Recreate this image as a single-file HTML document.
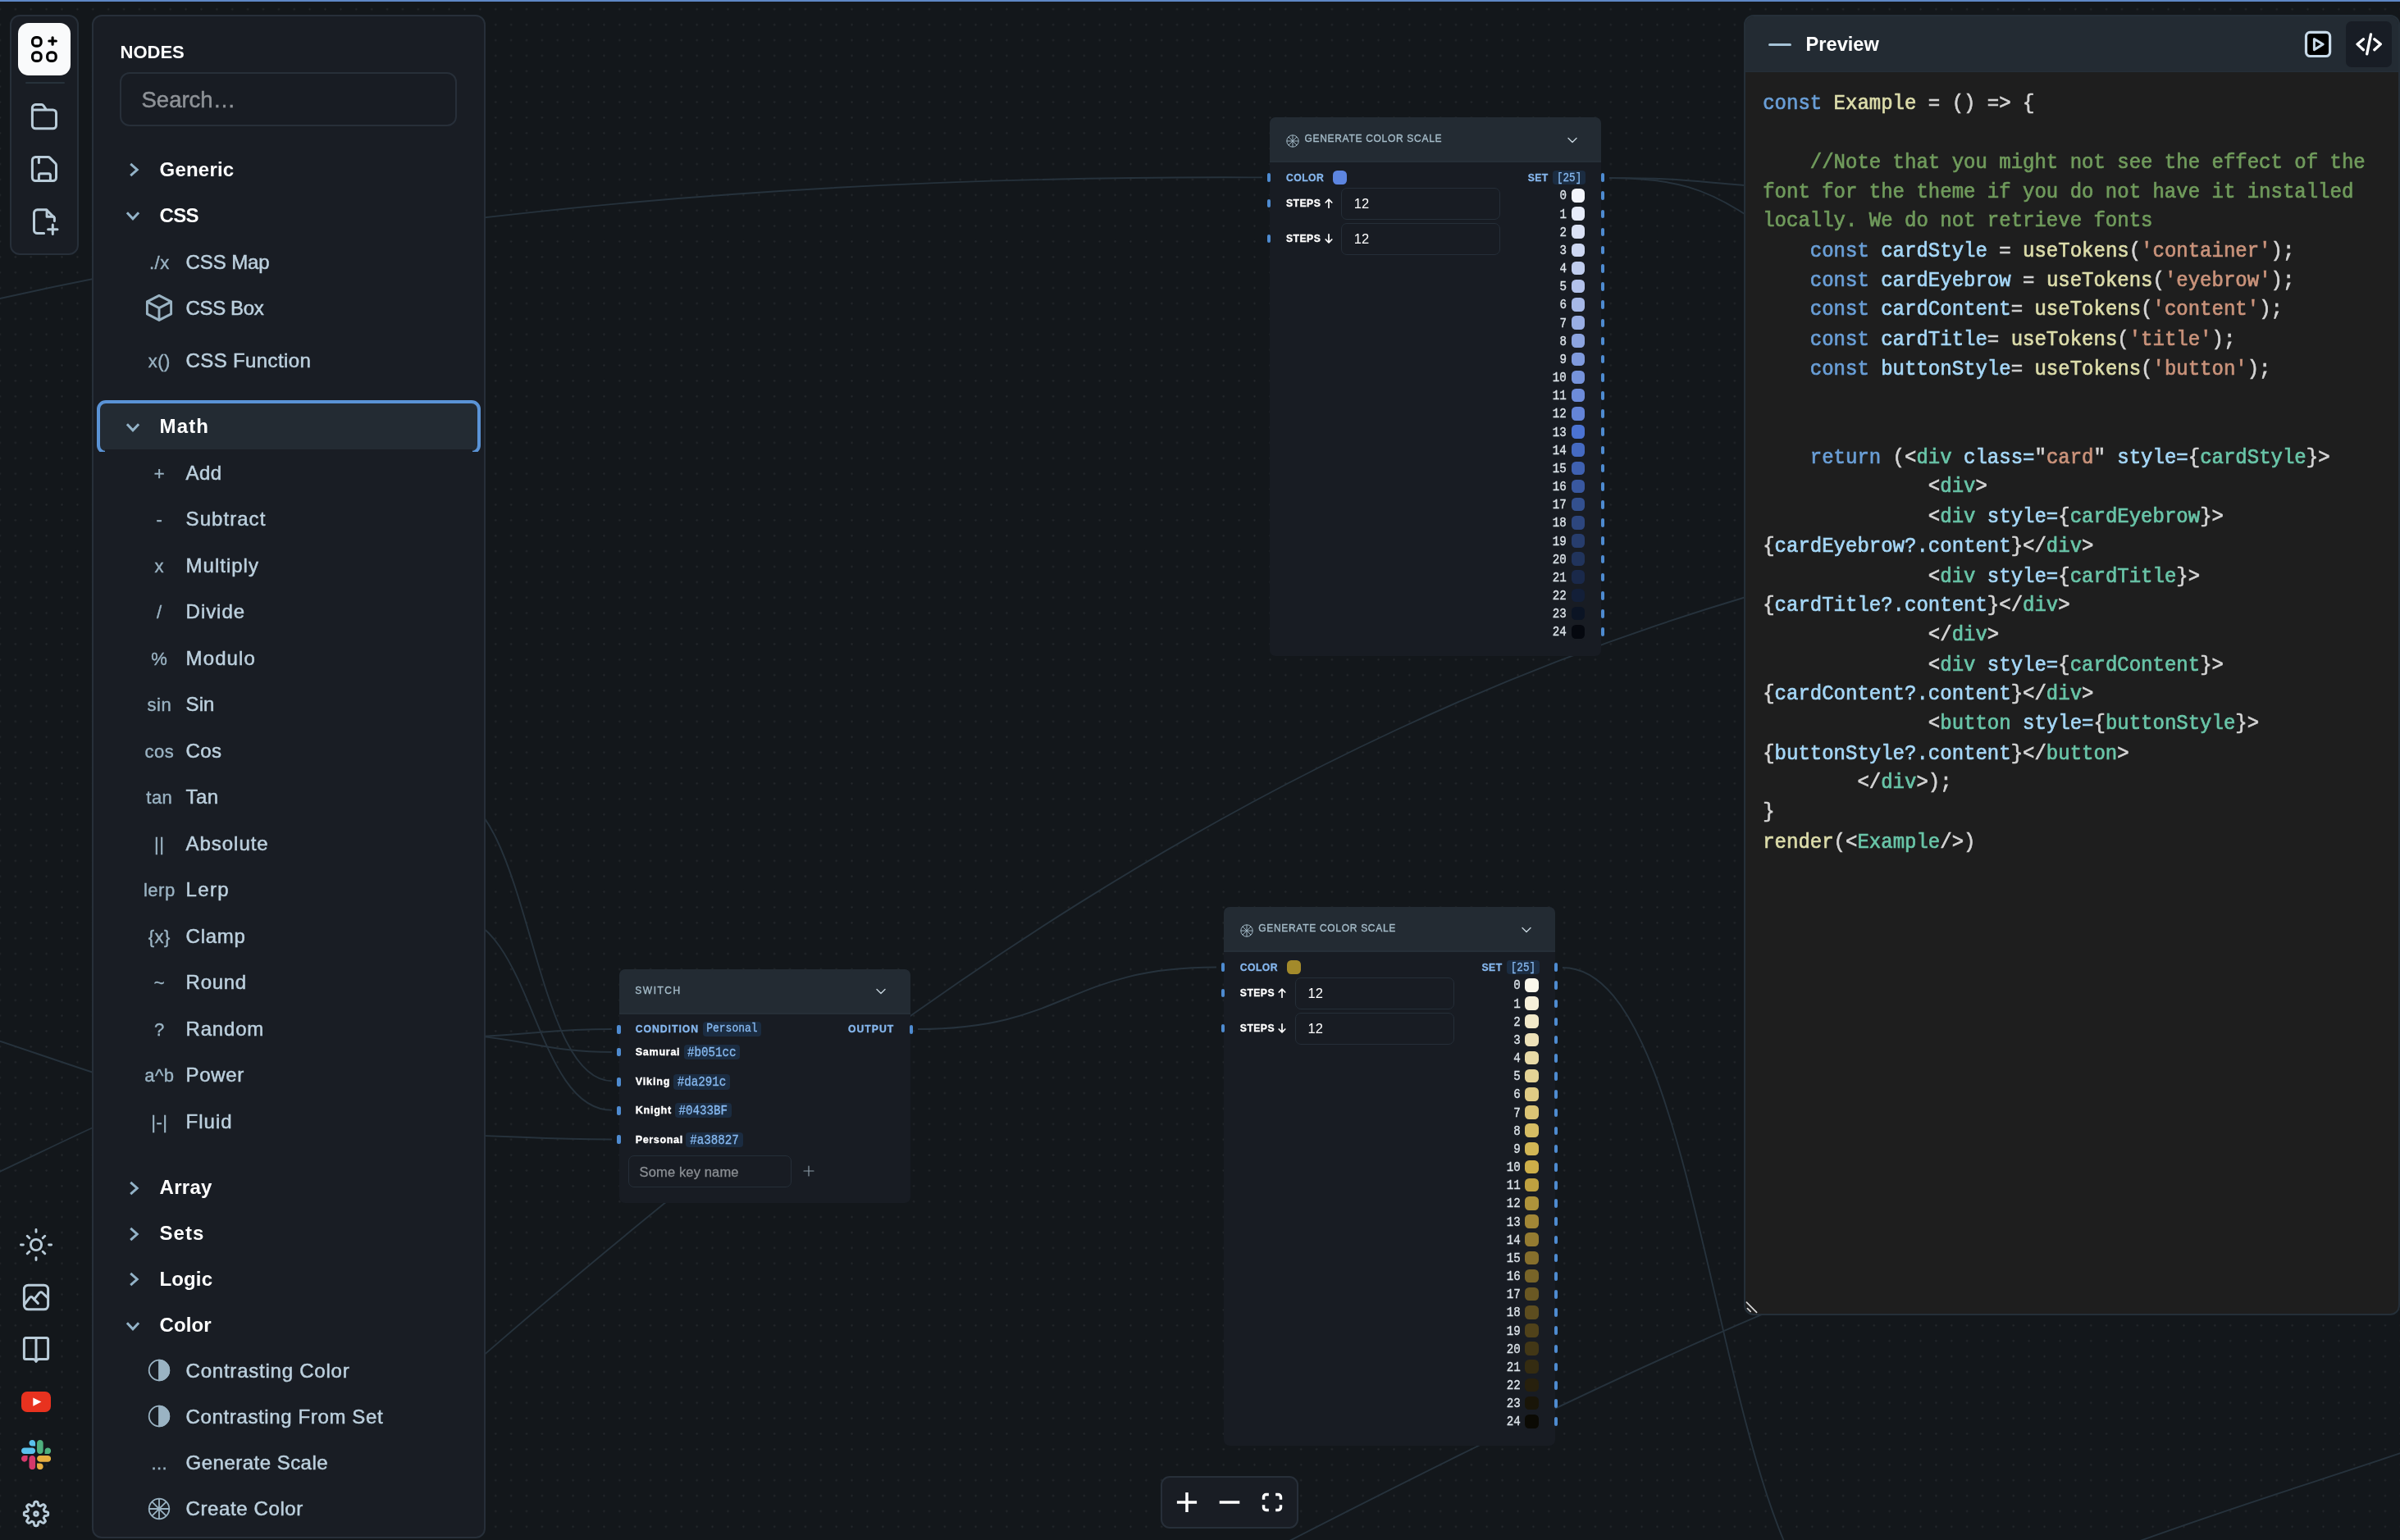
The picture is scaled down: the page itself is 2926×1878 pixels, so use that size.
<!DOCTYPE html>
<html><head><meta charset="utf-8"><title>Nodes</title>
<style>
html,body{margin:0;padding:0;}
html{width:2926px;height:1878px;overflow:hidden;}
body{width:2926px;height:1878px;overflow:hidden;background:#13171b;position:relative;font-family:"Liberation Sans", sans-serif;}
.b{position:absolute;box-sizing:border-box;display:block;}
.t{position:absolute;white-space:pre;}
#root{position:absolute;left:0;top:0;width:2926px;height:1878px;will-change:transform;overflow:hidden;}
.s{font-family:"Liberation Sans", sans-serif;}
.m{font-family:"Liberation Mono", monospace;transform:scaleY(1.1);-webkit-text-stroke:0.3px;}
.code{position:absolute;white-space:pre;font-family:"Liberation Mono", monospace;color:#d4d4d4;-webkit-text-stroke:0.65px;}
.k{color:#6a9fd7}.f{color:#dcdcaa}.v{color:#a5d7f7}.g{color:#ca937b}.c{color:#709b5c}.n{color:#69c5a8}
</style></head><body><div id="root">

<svg class="b" style="left:0;top:0" width="2926" height="1878" viewBox="0 0 2926 1878">
<defs><pattern id="dots" x="-9.441" y="1.859" width="18.883" height="18.883" patternUnits="userSpaceOnUse">
<circle cx="9.441" cy="9.441" r="1.15" fill="#262a2e"/></pattern></defs>
<rect width="2926" height="1878" fill="url(#dots)"/>
<g fill="none" stroke="#26323c" stroke-width="1.9"><path d="M-9 366 L0 364 C 504.5 252.1 1022.3 213.9 1539 216.4"/><path d="M1962 217 C 2044 217 2062 221 2127 226"/><path d="M1962 217 C 2044 217 2082 232 2127 261"/><path d="M552 1685.2 L592 1650.6 C 1062.4 1243.4 1530 906.7 2127 728.5"/><path d="M1119 1255 C 1301 1255 1301 1179.5 1483 1179.5"/><path d="M1905 1180 C 2093 1180 2091 1990 2281 1990"/><path d="M1555 1887.7 L1574 1878 C 1762.9 1781.4 1952.9 1686.5 2150 1602.2"/><path d="M2590 1886 C 2700 1845 2820 1808 2930 1771"/><path d="M542 966 C 647 966 647 1318.2 746 1318.2"/><path d="M548 1116 C 650 1116 650 1353.8 746 1353.8"/><path d="M480 1266 C 640 1266 650 1255 746 1255"/><path d="M480 1258 C 640 1260 650 1283 746 1283"/><path d="M480 1382 C 640 1385 650 1389.5 746 1389.5"/><path d="M-5 1268 C 40 1283 80 1297 120 1310"/><path d="M-5 1431 C 40 1410 80 1390 120 1372"/></g>
</svg>

<div class="b" style="left:0.00px;top:0.00px;width:2926.00px;height:2.20px;background:#5e88c6;"></div>
<div class="b" style="left:12.00px;top:18.00px;width:84.00px;height:293.00px;background:#191d24;border:2px solid #272f39;border-radius:12px;"></div>
<div class="b" style="left:22.00px;top:28.00px;width:64.20px;height:64.20px;background:#f9fafb;border-radius:13px;"></div>
<svg class="b" style="left:34.00px;top:40.00px;" width="40" height="40" viewBox="0 0 40 40" fill="none"><g stroke="#000" stroke-width="3.2" stroke-linecap="round" stroke-linejoin="round">
<rect x="5.6" y="5.6" width="10.5" height="10.5" rx="4.2"/>
<rect x="5.6" y="23.9" width="10.5" height="10.5" rx="4.2"/>
<rect x="23.7" y="23.9" width="10.5" height="10.5" rx="4.2"/>
<path d="M25.85 10H34.35M30.1 5.75V14.25"/></g></svg>
<div class="b" style="left:30.50px;top:100.00px;width:48.00px;height:2.00px;background:#27323b;border-radius:1px;"></div>
<svg class="b" style="left:34.00px;top:122.00px;" width="40" height="40" viewBox="0 0 40 40" fill="none"><g stroke="#b9ccd9" stroke-width="3" stroke-linecap="round" stroke-linejoin="round">
<path d="M5.4 12H30.5a4 4 0 0 1 4 4V30.8a4 4 0 0 1-4 4H9.4a4 4 0 0 1-4-4V9.6a4 4 0 0 1 4-4H16.6a3 3 0 0 1 2.4 1.2L22.6 12"/></g></svg>
<svg class="b" style="left:34.00px;top:186.00px;" width="40" height="40" viewBox="0 0 40 40" fill="none"><g stroke="#b9ccd9" stroke-width="3" stroke-linecap="round" stroke-linejoin="round">
<path d="M9.4 5.5H24.6a3 3 0 0 1 2.1.9L33.6 13.3a3 3 0 0 1 .9 2.1V30.6a4 4 0 0 1-4 4H9.4a4 4 0 0 1-4-4V9.5a4 4 0 0 1 4-4Z"/>
<path d="M13.4 5.5V12.6"/><path d="M13.4 34.6V27.7a2 2 0 0 1 2-2H25.4a2 2 0 0 1 2 2V34.6"/></g></svg>
<svg class="b" style="left:34.00px;top:250.00px;" width="40" height="40" viewBox="0 0 40 40" fill="none"><g stroke="#b9ccd9" stroke-width="3" stroke-linecap="round" stroke-linejoin="round">
<path d="M19.6 34.6H11.5a4 4 0 0 1-4-4V9.8a4 4 0 0 1 4-4H22.6L32.4 15.6V19.6"/>
<path d="M23.1 6.3V14.3H31.6"/><path d="M24.6 29.7H36M30.3 24V35.4"/></g></svg>
<svg class="b" style="left:22.00px;top:1496.00px;" width="44" height="44" viewBox="0 0 44 44" fill="none"><g stroke="#b9ccd9" stroke-width="2.9" stroke-linecap="round"><circle cx="22" cy="22" r="6.6"/><path d="M37.60 22.00L40.60 22.00M30.20 30.20L32.75 32.75M22.00 37.60L22.00 40.60M13.80 30.20L11.25 32.75M6.40 22.00L3.40 22.00M13.80 13.80L11.25 11.25M22.00 6.40L22.00 3.40M30.20 13.80L32.75 11.25"/></g></svg>
<svg class="b" style="left:24.00px;top:1562.00px;" width="40" height="40" viewBox="0 0 40 40" fill="none"><g stroke="#b9ccd9" stroke-width="3" stroke-linecap="round" stroke-linejoin="round">
<rect x="5.4" y="5.2" width="29.2" height="29.6" rx="5"/>
<path d="M6.2 28.4L12.2 20.4a2.2 2.2 0 0 1 3.4-.1L22.4 27.4"/><path d="M17.6 22.6L24 14.6a2.4 2.4 0 0 1 3.6-.1L34.4 21"/></g></svg>
<svg class="b" style="left:24.00px;top:1626.00px;" width="40" height="40" viewBox="0 0 40 40" fill="none"><g stroke="#b9ccd9" stroke-width="3" stroke-linecap="round" stroke-linejoin="round">
<path d="M20 7.4V33.6"/>
<path d="M20 5.6H7.4a2 2 0 0 0-2 2V29.4a2 2 0 0 0 2 2H16.2a4 4 0 0 1 3.8 3a4 4 0 0 1 3.8-3H32.6a2 2 0 0 0 2-2V7.6a2 2 0 0 0-2-2H20"/></g></svg>
<div class="b" style="left:26.00px;top:1697.00px;width:36.20px;height:25.20px;background:#e8321f;border-radius:7px;"></div>
<svg class="b" style="left:26.00px;top:1697.00px;" width="37" height="26" viewBox="0 0 37 26" fill="none"><path d="M14.3 7.4L24.4 12.6L14.3 17.8Z" fill="#fff"/></svg>
<svg class="b" style="left:26px;top:1756px" width="36.2" height="36.2" viewBox="0 0 122.8 122.8">
<path d="M25.8 77.6c0 7.1-5.8 12.9-12.9 12.9S0 84.7 0 77.6s5.8-12.9 12.9-12.9h12.9v12.9zm6.5 0c0-7.1 5.8-12.9 12.9-12.9s12.9 5.8 12.9 12.9v32.3c0 7.1-5.8 12.9-12.9 12.9s-12.9-5.8-12.9-12.9V77.6z" fill="#d4396b"/>
<path d="M45.2 25.8c-7.1 0-12.9-5.8-12.9-12.9S38.1 0 45.2 0s12.9 5.8 12.9 12.9v12.9H45.2zm0 6.5c7.1 0 12.9 5.8 12.9 12.9s-5.8 12.9-12.9 12.9H12.9C5.8 58.1 0 52.3 0 45.2s5.8-12.9 12.9-12.9h32.3z" fill="#5ac1ec"/>
<path d="M97 45.2c0-7.1 5.8-12.9 12.9-12.9s12.9 5.8 12.9 12.9-5.8 12.9-12.9 12.9H97V45.2zm-6.5 0c0 7.1-5.8 12.9-12.9 12.9s-12.9-5.8-12.9-12.9V12.9C64.7 5.8 70.5 0 77.6 0s12.9 5.8 12.9 12.9v32.3z" fill="#4fb07e"/>
<path d="M77.6 97c7.1 0 12.9 5.8 12.9 12.9s-5.8 12.9-12.9 12.9-12.9-5.8-12.9-12.9V97h12.9zm0-6.5c-7.1 0-12.9-5.8-12.9-12.9s5.8-12.9 12.9-12.9h32.3c7.1 0 12.9 5.8 12.9 12.9s-5.8 12.9-12.9 12.9H77.6z" fill="#e6ae40"/></svg>
<svg class="b" style="left:22.00px;top:1824.40px;" width="44" height="44" viewBox="0 0 44 44" fill="none"><g stroke="#b9ccd9" stroke-width="2.9" stroke-linejoin="round"><path d="M22.00 7.30L22.38 7.31L22.77 7.32L23.15 7.35L23.54 7.38L23.88 7.74L24.14 8.47L24.36 9.24L24.54 10.04L24.68 10.82L24.80 11.55L24.98 11.93L25.24 12.01L25.50 12.10L25.76 12.20L26.02 12.30L26.27 12.41L26.52 12.52L26.77 12.64L27.01 12.77L27.41 12.63L28.01 12.20L28.66 11.75L29.35 11.31L30.05 10.91L30.76 10.59L31.25 10.58L31.55 10.82L31.84 11.08L32.12 11.34L32.39 11.61L32.66 11.88L32.92 12.16L33.18 12.45L33.42 12.75L33.41 13.24L33.09 13.95L32.69 14.65L32.25 15.34L31.80 15.99L31.37 16.59L31.23 16.99L31.36 17.23L31.48 17.48L31.59 17.73L31.70 17.98L31.80 18.24L31.90 18.50L31.99 18.76L32.07 19.02L32.45 19.20L33.18 19.32L33.96 19.46L34.76 19.64L35.53 19.86L36.26 20.12L36.62 20.46L36.65 20.85L36.68 21.23L36.69 21.62L36.70 22.00L36.69 22.38L36.68 22.77L36.65 23.15L36.62 23.54L36.26 23.88L35.53 24.14L34.76 24.36L33.96 24.54L33.18 24.68L32.45 24.80L32.07 24.98L31.99 25.24L31.90 25.50L31.80 25.76L31.70 26.02L31.59 26.27L31.48 26.52L31.36 26.77L31.23 27.01L31.37 27.41L31.80 28.01L32.25 28.66L32.69 29.35L33.09 30.05L33.41 30.76L33.42 31.25L33.18 31.55L32.92 31.84L32.66 32.12L32.39 32.39L32.12 32.66L31.84 32.92L31.55 33.18L31.25 33.42L30.76 33.41L30.05 33.09L29.35 32.69L28.66 32.25L28.01 31.80L27.41 31.37L27.01 31.23L26.77 31.36L26.52 31.48L26.27 31.59L26.02 31.70L25.76 31.80L25.50 31.90L25.24 31.99L24.98 32.07L24.80 32.45L24.68 33.18L24.54 33.96L24.36 34.76L24.14 35.53L23.88 36.26L23.54 36.62L23.15 36.65L22.77 36.68L22.38 36.69L22.00 36.70L21.62 36.69L21.23 36.68L20.85 36.65L20.46 36.62L20.12 36.26L19.86 35.53L19.64 34.76L19.46 33.96L19.32 33.18L19.20 32.45L19.02 32.07L18.76 31.99L18.50 31.90L18.24 31.80L17.98 31.70L17.73 31.59L17.48 31.48L17.23 31.36L16.99 31.23L16.59 31.37L15.99 31.80L15.34 32.25L14.65 32.69L13.95 33.09L13.24 33.41L12.75 33.42L12.45 33.18L12.16 32.92L11.88 32.66L11.61 32.39L11.34 32.12L11.08 31.84L10.82 31.55L10.58 31.25L10.59 30.76L10.91 30.05L11.31 29.35L11.75 28.66L12.20 28.01L12.63 27.41L12.77 27.01L12.64 26.77L12.52 26.52L12.41 26.27L12.30 26.02L12.20 25.76L12.10 25.50L12.01 25.24L11.93 24.98L11.55 24.80L10.82 24.68L10.04 24.54L9.24 24.36L8.47 24.14L7.74 23.88L7.38 23.54L7.35 23.15L7.32 22.77L7.31 22.38L7.30 22.00L7.31 21.62L7.32 21.23L7.35 20.85L7.38 20.46L7.74 20.12L8.47 19.86L9.24 19.64L10.04 19.46L10.82 19.32L11.55 19.20L11.93 19.02L12.01 18.76L12.10 18.50L12.20 18.24L12.30 17.98L12.41 17.73L12.52 17.48L12.64 17.23L12.77 16.99L12.63 16.59L12.20 15.99L11.75 15.34L11.31 14.65L10.91 13.95L10.59 13.24L10.58 12.75L10.82 12.45L11.08 12.16L11.34 11.88L11.61 11.61L11.88 11.34L12.16 11.08L12.45 10.82L12.75 10.58L13.24 10.59L13.95 10.91L14.65 11.31L15.34 11.75L15.99 12.20L16.59 12.63L16.99 12.77L17.23 12.64L17.48 12.52L17.73 12.41L17.98 12.30L18.24 12.20L18.50 12.10L18.76 12.01L19.02 11.93L19.20 11.55L19.32 10.82L19.46 10.04L19.64 9.24L19.86 8.47L20.12 7.74L20.46 7.38L20.85 7.35L21.23 7.32L21.62 7.31Z"/><circle cx="22" cy="22" r="2.3"/></g></svg>
<div class="b" style="left:112.00px;top:18.00px;width:480.00px;height:1857.50px;background:#191d24;border:2px solid #272f39;border-radius:12px;"></div>
<div class="t s" style="top:47.50px;font-size:22px;line-height:31px;color:#fff;font-weight:bold;left:146.50px;">NODES</div>
<div class="b" style="left:146.00px;top:88.00px;width:411.00px;height:66.00px;background:#181c23;border:2px solid #272f39;border-radius:12px;"></div>
<div class="t s" style="top:102.50px;font-size:27.5px;line-height:38px;color:#8e9297;left:172.50px;-webkit-text-stroke:0.5px;">Search…</div>
<svg class="b" style="left:152.70px;top:195.10px;" width="20" height="24" viewBox="0 0 20 24" fill="none"><path d="M6.2 4.9L14.2 12L6.2 19.1" stroke="#93b3c8" stroke-width="3" stroke-linejoin="miter"/></svg><div class="t s" style="top:189.50px;font-size:24px;line-height:34px;color:#fff;font-weight:bold;letter-spacing:0.2px;left:194.60px;">Generic</div>
<svg class="b" style="left:150.10px;top:253.00px;" width="24" height="20" viewBox="0 0 24 20" fill="none"><path d="M4.9 6.2L12 13.8L19.1 6.2" stroke="#93b3c8" stroke-width="3" stroke-linejoin="miter"/></svg><div class="t s" style="top:245.50px;font-size:24px;line-height:34px;color:#fff;font-weight:bold;letter-spacing:-0.7px;left:194.60px;">CSS</div>
<div class="t s" style="top:305.00px;font-size:22px;line-height:31px;color:#9ab3c3;letter-spacing:0.5px;left:-105.70px;width:600px;text-align:center;-webkit-text-stroke:0.4px;">./x</div><div class="t s" style="top:303.00px;font-size:24px;line-height:34px;color:#bcd0de;letter-spacing:-0.1px;left:226.60px;-webkit-text-stroke:0.5px;">CSS Map</div>
<div class="t s" style="top:358.60px;font-size:24px;line-height:34px;color:#bcd0de;letter-spacing:-0.38px;left:226.60px;-webkit-text-stroke:0.5px;">CSS Box</div>
<svg class="b" style="left:174.00px;top:355.00px;" width="40" height="40" viewBox="0 0 40 40" fill="none"><g stroke="#9ab3c3" stroke-width="2.9" stroke-linejoin="round" stroke-linecap="round">
<path d="M20 5.4L34.6 12.9V27.9L20 35.4L5.4 27.9V12.9Z"/><path d="M5.6 13.1L20 20.6L34.4 13.1M20 20.6V35.2"/></g></svg>
<div class="t s" style="top:424.90px;font-size:22px;line-height:31px;color:#9ab3c3;letter-spacing:0.5px;left:-105.70px;width:600px;text-align:center;-webkit-text-stroke:0.4px;">x()</div><div class="t s" style="top:422.90px;font-size:24px;line-height:34px;color:#bcd0de;letter-spacing:0.37px;left:226.60px;-webkit-text-stroke:0.5px;">CSS Function</div>
<div class="b" style="left:117.9px;top:487.9px;width:467.8px;height:66px;background:#232b33;border:4.2px solid #5a93d6;border-radius:11px;"></div>
<div class="b" style="left:127.80px;top:547.60px;width:448.00px;height:10.00px;background:#191d24;"></div>
<div class="b" style="left:118.00px;top:551.20px;width:468.00px;height:6.00px;background:#191d24;"></div>
<svg class="b" style="left:150.10px;top:510.80px;" width="24" height="20" viewBox="0 0 24 20" fill="none"><path d="M4.9 6.2L12 13.8L19.1 6.2" stroke="#93b3c8" stroke-width="3" stroke-linejoin="miter"/></svg><div class="t s" style="top:503.30px;font-size:24px;line-height:34px;color:#fff;font-weight:bold;letter-spacing:1.1px;left:194.60px;">Math</div>
<div class="t s" style="top:562.00px;font-size:22px;line-height:31px;color:#9ab3c3;letter-spacing:0.5px;left:-105.70px;width:600px;text-align:center;-webkit-text-stroke:0.4px;">+</div><div class="t s" style="top:560.00px;font-size:24px;line-height:34px;color:#bcd0de;letter-spacing:0.4px;left:226.60px;-webkit-text-stroke:0.5px;">Add</div>
<div class="t s" style="top:618.47px;font-size:22px;line-height:31px;color:#9ab3c3;letter-spacing:0.5px;left:-105.70px;width:600px;text-align:center;-webkit-text-stroke:0.4px;">-</div><div class="t s" style="top:616.47px;font-size:24px;line-height:34px;color:#bcd0de;letter-spacing:1.05px;left:226.60px;-webkit-text-stroke:0.5px;">Subtract</div>
<div class="t s" style="top:674.94px;font-size:22px;line-height:31px;color:#9ab3c3;letter-spacing:0.5px;left:-105.70px;width:600px;text-align:center;-webkit-text-stroke:0.4px;">x</div><div class="t s" style="top:672.94px;font-size:24px;line-height:34px;color:#bcd0de;letter-spacing:1.0px;left:226.60px;-webkit-text-stroke:0.5px;">Multiply</div>
<div class="t s" style="top:731.41px;font-size:22px;line-height:31px;color:#9ab3c3;letter-spacing:0.5px;left:-105.70px;width:600px;text-align:center;-webkit-text-stroke:0.4px;">/</div><div class="t s" style="top:729.41px;font-size:24px;line-height:34px;color:#bcd0de;letter-spacing:0.95px;left:226.60px;-webkit-text-stroke:0.5px;">Divide</div>
<div class="t s" style="top:787.88px;font-size:22px;line-height:31px;color:#9ab3c3;letter-spacing:0.5px;left:-105.70px;width:600px;text-align:center;-webkit-text-stroke:0.4px;">%</div><div class="t s" style="top:785.88px;font-size:24px;line-height:34px;color:#bcd0de;letter-spacing:1.1px;left:226.60px;-webkit-text-stroke:0.5px;">Modulo</div>
<div class="t s" style="top:844.35px;font-size:22px;line-height:31px;color:#9ab3c3;letter-spacing:0.5px;left:-105.70px;width:600px;text-align:center;-webkit-text-stroke:0.4px;">sin</div><div class="t s" style="top:842.35px;font-size:24px;line-height:34px;color:#bcd0de;letter-spacing:0.05px;left:226.60px;-webkit-text-stroke:0.5px;">Sin</div>
<div class="t s" style="top:900.82px;font-size:22px;line-height:31px;color:#9ab3c3;letter-spacing:0.5px;left:-105.70px;width:600px;text-align:center;-webkit-text-stroke:0.4px;">cos</div><div class="t s" style="top:898.82px;font-size:24px;line-height:34px;color:#bcd0de;letter-spacing:0.35px;left:226.60px;-webkit-text-stroke:0.5px;">Cos</div>
<div class="t s" style="top:957.29px;font-size:22px;line-height:31px;color:#9ab3c3;letter-spacing:0.5px;left:-105.70px;width:600px;text-align:center;-webkit-text-stroke:0.4px;">tan</div><div class="t s" style="top:955.29px;font-size:24px;line-height:34px;color:#bcd0de;letter-spacing:0.4px;left:226.60px;-webkit-text-stroke:0.5px;">Tan</div>
<div class="t s" style="top:1013.76px;font-size:22px;line-height:31px;color:#9ab3c3;letter-spacing:0.5px;left:-105.70px;width:600px;text-align:center;-webkit-text-stroke:0.4px;">||</div><div class="t s" style="top:1011.76px;font-size:24px;line-height:34px;color:#bcd0de;letter-spacing:0.95px;left:226.60px;-webkit-text-stroke:0.5px;">Absolute</div>
<div class="t s" style="top:1070.23px;font-size:22px;line-height:31px;color:#9ab3c3;letter-spacing:0.5px;left:-105.70px;width:600px;text-align:center;-webkit-text-stroke:0.4px;">lerp</div><div class="t s" style="top:1068.23px;font-size:24px;line-height:34px;color:#bcd0de;letter-spacing:1.35px;left:226.60px;-webkit-text-stroke:0.5px;">Lerp</div>
<div class="t s" style="top:1126.70px;font-size:22px;line-height:31px;color:#9ab3c3;letter-spacing:0.5px;left:-105.70px;width:600px;text-align:center;-webkit-text-stroke:0.4px;">{x}</div><div class="t s" style="top:1124.70px;font-size:24px;line-height:34px;color:#bcd0de;letter-spacing:0.7px;left:226.60px;-webkit-text-stroke:0.5px;">Clamp</div>
<div class="t s" style="top:1183.17px;font-size:22px;line-height:31px;color:#9ab3c3;letter-spacing:0.5px;left:-105.70px;width:600px;text-align:center;-webkit-text-stroke:0.4px;">~</div><div class="t s" style="top:1181.17px;font-size:24px;line-height:34px;color:#bcd0de;letter-spacing:0.7px;left:226.60px;-webkit-text-stroke:0.5px;">Round</div>
<div class="t s" style="top:1239.64px;font-size:22px;line-height:31px;color:#9ab3c3;letter-spacing:0.5px;left:-105.70px;width:600px;text-align:center;-webkit-text-stroke:0.4px;">?</div><div class="t s" style="top:1237.64px;font-size:24px;line-height:34px;color:#bcd0de;letter-spacing:0.8px;left:226.60px;-webkit-text-stroke:0.5px;">Random</div>
<div class="t s" style="top:1296.11px;font-size:22px;line-height:31px;color:#9ab3c3;letter-spacing:0.5px;left:-105.70px;width:600px;text-align:center;-webkit-text-stroke:0.4px;">a^b</div><div class="t s" style="top:1294.11px;font-size:24px;line-height:34px;color:#bcd0de;letter-spacing:0.65px;left:226.60px;-webkit-text-stroke:0.5px;">Power</div>
<div class="t s" style="top:1352.58px;font-size:22px;line-height:31px;color:#9ab3c3;letter-spacing:0.5px;left:-105.70px;width:600px;text-align:center;-webkit-text-stroke:0.4px;">|-|</div><div class="t s" style="top:1350.58px;font-size:24px;line-height:34px;color:#bcd0de;letter-spacing:1.0px;left:226.60px;-webkit-text-stroke:0.5px;">Fluid</div>
<svg class="b" style="left:152.70px;top:1436.60px;" width="20" height="24" viewBox="0 0 20 24" fill="none"><path d="M6.2 4.9L14.2 12L6.2 19.1" stroke="#93b3c8" stroke-width="3" stroke-linejoin="miter"/></svg><div class="t s" style="top:1431.00px;font-size:24px;line-height:34px;color:#fff;font-weight:bold;letter-spacing:0.28px;left:194.60px;">Array</div>
<svg class="b" style="left:152.70px;top:1492.60px;" width="20" height="24" viewBox="0 0 20 24" fill="none"><path d="M6.2 4.9L14.2 12L6.2 19.1" stroke="#93b3c8" stroke-width="3" stroke-linejoin="miter"/></svg><div class="t s" style="top:1487.00px;font-size:24px;line-height:34px;color:#fff;font-weight:bold;letter-spacing:1.0px;left:194.60px;">Sets</div>
<svg class="b" style="left:152.70px;top:1548.10px;" width="20" height="24" viewBox="0 0 20 24" fill="none"><path d="M6.2 4.9L14.2 12L6.2 19.1" stroke="#93b3c8" stroke-width="3" stroke-linejoin="miter"/></svg><div class="t s" style="top:1542.50px;font-size:24px;line-height:34px;color:#fff;font-weight:bold;letter-spacing:0.1px;left:194.60px;">Logic</div>
<svg class="b" style="left:150.10px;top:1606.50px;" width="24" height="20" viewBox="0 0 24 20" fill="none"><path d="M4.9 6.2L12 13.8L19.1 6.2" stroke="#93b3c8" stroke-width="3" stroke-linejoin="miter"/></svg><div class="t s" style="top:1599.00px;font-size:24px;line-height:34px;color:#fff;font-weight:bold;letter-spacing:0.1px;left:194.60px;">Color</div>
<svg class="b" style="left:174.00px;top:1651.10px;" width="40" height="40" viewBox="0 0 40 40" fill="none"><circle cx="20" cy="20" r="12.3" stroke="#9ab3c3" stroke-width="1.8"/>
<path d="M20 7.7A12.3 12.3 0 0 1 20 32.3Z" fill="#9ab3c3" stroke="#9ab3c3" stroke-width="1.8"/></svg>
<div class="t s" style="top:1655.00px;font-size:24px;line-height:34px;color:#bcd0de;letter-spacing:0.77px;left:226.60px;-webkit-text-stroke:0.5px;">Contrasting Color</div>
<svg class="b" style="left:174.00px;top:1706.90px;" width="40" height="40" viewBox="0 0 40 40" fill="none"><circle cx="20" cy="20" r="12.3" stroke="#9ab3c3" stroke-width="1.8"/>
<path d="M20 7.7A12.3 12.3 0 0 1 20 32.3Z" fill="#9ab3c3" stroke="#9ab3c3" stroke-width="1.8"/></svg>
<div class="t s" style="top:1710.90px;font-size:24px;line-height:34px;color:#bcd0de;letter-spacing:0.63px;left:226.60px;-webkit-text-stroke:0.5px;">Contrasting From Set</div>
<div class="t s" style="top:1769.20px;font-size:22px;line-height:31px;color:#9ab3c3;letter-spacing:0.5px;left:-105.70px;width:600px;text-align:center;-webkit-text-stroke:0.4px;">...</div><div class="t s" style="top:1767.20px;font-size:24px;line-height:34px;color:#bcd0de;letter-spacing:0.48px;left:226.60px;-webkit-text-stroke:0.5px;">Generate Scale</div>
<svg class="b" style="left:174.00px;top:1820.00px;" width="40" height="40" viewBox="0 0 40 40" fill="none"><g stroke="#9ab3c3" stroke-width="1.8"><circle cx="20" cy="20" r="12.3"/><path d="M32.30 20.00L7.70 20.00M28.70 28.70L11.30 11.30M20.00 32.30L20.00 7.70M11.30 28.70L28.70 11.30"/></g></svg>
<div class="t s" style="top:1823.30px;font-size:24px;line-height:34px;color:#bcd0de;letter-spacing:0.6px;left:226.60px;-webkit-text-stroke:0.5px;">Create Color</div>
<div class="b" style="left:1548.2px;top:143.4px;width:404px;height:656.2px;background:#181c23;border-radius:7px;overflow:hidden;"><div class="b" style="left:0;top:0;width:404px;height:54.7px;background:#232b33;border-bottom:2.4px solid #262f38;"></div></div><svg class="b" style="left:1556.20px;top:151.90px;" width="40" height="40" viewBox="0 0 40 40" fill="none"><g stroke="#9fb5c2" stroke-width="1.0"><circle cx="20" cy="20" r="7.2"/><path d="M27.20 20.00L12.80 20.00M25.09 25.09L14.91 14.91M20.00 27.20L20.00 12.80M14.91 25.09L25.09 14.91"/></g></svg><div class="t s" style="top:161.10px;font-size:12px;line-height:17px;color:#a5bcc9;letter-spacing:0.7px;left:1590.40px;-webkit-text-stroke:0.35px;">GENERATE COLOR SCALE</div><svg class="b" style="left:1908.70px;top:164.80px;" width="16" height="12" viewBox="0 0 16 12" fill="none"><path d="M3 3.6L8 8.4L13 3.6" stroke="#c5d3dc" stroke-width="1.4" stroke-linecap="round" stroke-linejoin="round"/></svg><div class="b" style="left:1545.10px;top:211.20px;width:4.40px;height:10.60px;background:#4e8bd0;border-radius:2.1px;"></div><div class="t s" style="top:208.80px;font-size:12.2px;line-height:17px;color:#86b7ee;font-weight:bold;letter-spacing:0.45px;left:1568.00px;-webkit-text-stroke:0.3px;">COLOR</div><div class="b" style="left:1625.00px;top:208.40px;width:17.00px;height:16.60px;background:#5d85e0;border-radius:5.2px;"></div><div class="b" style="left:1545.10px;top:242.70px;width:4.40px;height:10.60px;background:#4e8bd0;border-radius:2.1px;"></div><div class="t s" style="top:239.90px;font-size:12.2px;line-height:17px;color:#fff;font-weight:bold;letter-spacing:0.45px;left:1568.00px;-webkit-text-stroke:0.3px;">STEPS</div><svg class="b" style="left:1613.60px;top:241.00px;" width="12" height="14" viewBox="0 0 12 14" fill="none"><path d="M6 12.2V2.2M2.2 6L6 2.2L9.8 6" stroke="#fff" stroke-width="1.7" stroke-linecap="round" stroke-linejoin="round"/></svg><div class="b" style="left:1634.80px;top:228.50px;width:194.40px;height:39.00px;background:#181c23;border:1.3px solid #252e38;border-radius:7px;"></div><div class="t s" style="top:236.80px;font-size:16.5px;line-height:23px;color:#fff;left:1650.80px;">12</div><div class="b" style="left:1545.10px;top:285.70px;width:4.40px;height:10.60px;background:#4e8bd0;border-radius:2.1px;"></div><div class="t s" style="top:282.90px;font-size:12.2px;line-height:17px;color:#fff;font-weight:bold;letter-spacing:0.45px;left:1568.00px;-webkit-text-stroke:0.3px;">STEPS</div><svg class="b" style="left:1613.60px;top:284.00px;" width="12" height="14" viewBox="0 0 12 14" fill="none"><path d="M6 1.8V11.8M2.2 8L6 11.8L9.8 8" stroke="#fff" stroke-width="1.7" stroke-linecap="round" stroke-linejoin="round"/></svg><div class="b" style="left:1634.80px;top:271.50px;width:194.40px;height:39.00px;background:#181c23;border:1.3px solid #252e38;border-radius:7px;"></div><div class="t s" style="top:279.80px;font-size:16.5px;line-height:23px;color:#fff;left:1650.80px;">12</div><div class="t s" style="top:208.80px;font-size:12.2px;line-height:17px;color:#86b7ee;font-weight:bold;letter-spacing:0.45px;left:1862.70px;-webkit-text-stroke:0.3px;">SET</div><div class="b" style="left:1893.00px;top:208.10px;width:40.20px;height:17.30px;background:#1b2c41;border-radius:4px;"></div><div class="t m" style="top:209.19px;font-size:12.6px;line-height:18px;color:#86b8ef;left:1613.10px;width:600px;text-align:center;">[25]</div><div class="b" style="left:1951.60px;top:211.40px;width:4.40px;height:10.60px;background:#4e8bd0;border-radius:2.1px;"></div><div class="t m" style="top:229.49px;font-size:14.2px;line-height:20px;color:#dde4ea;left:1309.90px;width:600px;text-align:right;">0</div><div class="b" style="left:1915.60px;top:230.10px;width:16.60px;height:16.60px;background:#f3f5fc;border-radius:5.2px;"></div><div class="b" style="left:1951.60px;top:233.40px;width:4.40px;height:10.60px;background:#4e8bd0;border-radius:2.1px;"></div><div class="t m" style="top:251.65px;font-size:14.2px;line-height:20px;color:#dde4ea;left:1309.90px;width:600px;text-align:right;">1</div><div class="b" style="left:1915.60px;top:252.26px;width:16.60px;height:16.60px;background:#e6ebf9;border-radius:5.2px;"></div><div class="b" style="left:1951.60px;top:255.56px;width:4.40px;height:10.60px;background:#4e8bd0;border-radius:2.1px;"></div><div class="t m" style="top:273.81px;font-size:14.2px;line-height:20px;color:#dde4ea;left:1309.90px;width:600px;text-align:right;">2</div><div class="b" style="left:1915.60px;top:274.42px;width:16.60px;height:16.60px;background:#dae1f5;border-radius:5.2px;"></div><div class="b" style="left:1951.60px;top:277.72px;width:4.40px;height:10.60px;background:#4e8bd0;border-radius:2.1px;"></div><div class="t m" style="top:295.97px;font-size:14.2px;line-height:20px;color:#dde4ea;left:1309.90px;width:600px;text-align:right;">3</div><div class="b" style="left:1915.60px;top:296.58px;width:16.60px;height:16.60px;background:#cdd7f2;border-radius:5.2px;"></div><div class="b" style="left:1951.60px;top:299.88px;width:4.40px;height:10.60px;background:#4e8bd0;border-radius:2.1px;"></div><div class="t m" style="top:318.13px;font-size:14.2px;line-height:20px;color:#dde4ea;left:1309.90px;width:600px;text-align:right;">4</div><div class="b" style="left:1915.60px;top:318.74px;width:16.60px;height:16.60px;background:#c0cdee;border-radius:5.2px;"></div><div class="b" style="left:1951.60px;top:322.04px;width:4.40px;height:10.60px;background:#4e8bd0;border-radius:2.1px;"></div><div class="t m" style="top:340.29px;font-size:14.2px;line-height:20px;color:#dde4ea;left:1309.90px;width:600px;text-align:right;">5</div><div class="b" style="left:1915.60px;top:340.90px;width:16.60px;height:16.60px;background:#b3c2eb;border-radius:5.2px;"></div><div class="b" style="left:1951.60px;top:344.20px;width:4.40px;height:10.60px;background:#4e8bd0;border-radius:2.1px;"></div><div class="t m" style="top:362.45px;font-size:14.2px;line-height:20px;color:#dde4ea;left:1309.90px;width:600px;text-align:right;">6</div><div class="b" style="left:1915.60px;top:363.06px;width:16.60px;height:16.60px;background:#a6b8e7;border-radius:5.2px;"></div><div class="b" style="left:1951.60px;top:366.36px;width:4.40px;height:10.60px;background:#4e8bd0;border-radius:2.1px;"></div><div class="t m" style="top:384.61px;font-size:14.2px;line-height:20px;color:#dde4ea;left:1309.90px;width:600px;text-align:right;">7</div><div class="b" style="left:1915.60px;top:385.22px;width:16.60px;height:16.60px;background:#99aee4;border-radius:5.2px;"></div><div class="b" style="left:1951.60px;top:388.52px;width:4.40px;height:10.60px;background:#4e8bd0;border-radius:2.1px;"></div><div class="t m" style="top:406.77px;font-size:14.2px;line-height:20px;color:#dde4ea;left:1309.90px;width:600px;text-align:right;">8</div><div class="b" style="left:1915.60px;top:407.38px;width:16.60px;height:16.60px;background:#8ca4e0;border-radius:5.2px;"></div><div class="b" style="left:1951.60px;top:410.68px;width:4.40px;height:10.60px;background:#4e8bd0;border-radius:2.1px;"></div><div class="t m" style="top:428.93px;font-size:14.2px;line-height:20px;color:#dde4ea;left:1309.90px;width:600px;text-align:right;">9</div><div class="b" style="left:1915.60px;top:429.54px;width:16.60px;height:16.60px;background:#7f9add;border-radius:5.2px;"></div><div class="b" style="left:1951.60px;top:432.84px;width:4.40px;height:10.60px;background:#4e8bd0;border-radius:2.1px;"></div><div class="t m" style="top:451.09px;font-size:14.2px;line-height:20px;color:#dde4ea;left:1309.90px;width:600px;text-align:right;">10</div><div class="b" style="left:1915.60px;top:451.70px;width:16.60px;height:16.60px;background:#7693db;border-radius:5.2px;"></div><div class="b" style="left:1951.60px;top:455.00px;width:4.40px;height:10.60px;background:#4e8bd0;border-radius:2.1px;"></div><div class="t m" style="top:473.25px;font-size:14.2px;line-height:20px;color:#dde4ea;left:1309.90px;width:600px;text-align:right;">11</div><div class="b" style="left:1915.60px;top:473.86px;width:16.60px;height:16.60px;background:#6d8bd9;border-radius:5.2px;"></div><div class="b" style="left:1951.60px;top:477.16px;width:4.40px;height:10.60px;background:#4e8bd0;border-radius:2.1px;"></div><div class="t m" style="top:495.41px;font-size:14.2px;line-height:20px;color:#dde4ea;left:1309.90px;width:600px;text-align:right;">12</div><div class="b" style="left:1915.60px;top:496.02px;width:16.60px;height:16.60px;background:#6484d7;border-radius:5.2px;"></div><div class="b" style="left:1951.60px;top:499.32px;width:4.40px;height:10.60px;background:#4e8bd0;border-radius:2.1px;"></div><div class="t m" style="top:517.57px;font-size:14.2px;line-height:20px;color:#dde4ea;left:1309.90px;width:600px;text-align:right;">13</div><div class="b" style="left:1915.60px;top:518.18px;width:16.60px;height:16.60px;background:#4b73d3;border-radius:5.2px;"></div><div class="b" style="left:1951.60px;top:521.48px;width:4.40px;height:10.60px;background:#4e8bd0;border-radius:2.1px;"></div><div class="t m" style="top:539.73px;font-size:14.2px;line-height:20px;color:#dde4ea;left:1309.90px;width:600px;text-align:right;">14</div><div class="b" style="left:1915.60px;top:540.34px;width:16.60px;height:16.60px;background:#456ac2;border-radius:5.2px;"></div><div class="b" style="left:1951.60px;top:543.64px;width:4.40px;height:10.60px;background:#4e8bd0;border-radius:2.1px;"></div><div class="t m" style="top:561.89px;font-size:14.2px;line-height:20px;color:#dde4ea;left:1309.90px;width:600px;text-align:right;">15</div><div class="b" style="left:1915.60px;top:562.50px;width:16.60px;height:16.60px;background:#3f61b1;border-radius:5.2px;"></div><div class="b" style="left:1951.60px;top:565.80px;width:4.40px;height:10.60px;background:#4e8bd0;border-radius:2.1px;"></div><div class="t m" style="top:584.05px;font-size:14.2px;line-height:20px;color:#dde4ea;left:1309.90px;width:600px;text-align:right;">16</div><div class="b" style="left:1915.60px;top:584.66px;width:16.60px;height:16.60px;background:#3958a0;border-radius:5.2px;"></div><div class="b" style="left:1951.60px;top:587.96px;width:4.40px;height:10.60px;background:#4e8bd0;border-radius:2.1px;"></div><div class="t m" style="top:606.21px;font-size:14.2px;line-height:20px;color:#dde4ea;left:1309.90px;width:600px;text-align:right;">17</div><div class="b" style="left:1915.60px;top:606.82px;width:16.60px;height:16.60px;background:#33508f;border-radius:5.2px;"></div><div class="b" style="left:1951.60px;top:610.12px;width:4.40px;height:10.60px;background:#4e8bd0;border-radius:2.1px;"></div><div class="t m" style="top:628.37px;font-size:14.2px;line-height:20px;color:#dde4ea;left:1309.90px;width:600px;text-align:right;">18</div><div class="b" style="left:1915.60px;top:628.98px;width:16.60px;height:16.60px;background:#2d467e;border-radius:5.2px;"></div><div class="b" style="left:1951.60px;top:632.28px;width:4.40px;height:10.60px;background:#4e8bd0;border-radius:2.1px;"></div><div class="t m" style="top:650.53px;font-size:14.2px;line-height:20px;color:#dde4ea;left:1309.90px;width:600px;text-align:right;">19</div><div class="b" style="left:1915.60px;top:651.14px;width:16.60px;height:16.60px;background:#273d6d;border-radius:5.2px;"></div><div class="b" style="left:1951.60px;top:654.44px;width:4.40px;height:10.60px;background:#4e8bd0;border-radius:2.1px;"></div><div class="t m" style="top:672.69px;font-size:14.2px;line-height:20px;color:#dde4ea;left:1309.90px;width:600px;text-align:right;">20</div><div class="b" style="left:1915.60px;top:673.30px;width:16.60px;height:16.60px;background:#21345c;border-radius:5.2px;"></div><div class="b" style="left:1951.60px;top:676.60px;width:4.40px;height:10.60px;background:#4e8bd0;border-radius:2.1px;"></div><div class="t m" style="top:694.85px;font-size:14.2px;line-height:20px;color:#dde4ea;left:1309.90px;width:600px;text-align:right;">21</div><div class="b" style="left:1915.60px;top:695.46px;width:16.60px;height:16.60px;background:#1a294a;border-radius:5.2px;"></div><div class="b" style="left:1951.60px;top:698.76px;width:4.40px;height:10.60px;background:#4e8bd0;border-radius:2.1px;"></div><div class="t m" style="top:717.01px;font-size:14.2px;line-height:20px;color:#dde4ea;left:1309.90px;width:600px;text-align:right;">22</div><div class="b" style="left:1915.60px;top:717.62px;width:16.60px;height:16.60px;background:#131f38;border-radius:5.2px;"></div><div class="b" style="left:1951.60px;top:720.92px;width:4.40px;height:10.60px;background:#4e8bd0;border-radius:2.1px;"></div><div class="t m" style="top:739.17px;font-size:14.2px;line-height:20px;color:#dde4ea;left:1309.90px;width:600px;text-align:right;">23</div><div class="b" style="left:1915.60px;top:739.78px;width:16.60px;height:16.60px;background:#0b1424;border-radius:5.2px;"></div><div class="b" style="left:1951.60px;top:743.08px;width:4.40px;height:10.60px;background:#4e8bd0;border-radius:2.1px;"></div><div class="t m" style="top:761.33px;font-size:14.2px;line-height:20px;color:#dde4ea;left:1309.90px;width:600px;text-align:right;">24</div><div class="b" style="left:1915.60px;top:761.94px;width:16.60px;height:16.60px;background:#05080f;border-radius:5.2px;"></div><div class="b" style="left:1951.60px;top:765.24px;width:4.40px;height:10.60px;background:#4e8bd0;border-radius:2.1px;"></div>
<div class="b" style="left:1492px;top:1106.3999999999999px;width:404px;height:656.2px;background:#181c23;border-radius:7px;overflow:hidden;"><div class="b" style="left:0;top:0;width:404px;height:54.7px;background:#232b33;border-bottom:2.4px solid #262f38;"></div></div><svg class="b" style="left:1500.00px;top:1114.90px;" width="40" height="40" viewBox="0 0 40 40" fill="none"><g stroke="#9fb5c2" stroke-width="1.0"><circle cx="20" cy="20" r="7.2"/><path d="M27.20 20.00L12.80 20.00M25.09 25.09L14.91 14.91M20.00 27.20L20.00 12.80M14.91 25.09L25.09 14.91"/></g></svg><div class="t s" style="top:1124.10px;font-size:12px;line-height:17px;color:#a5bcc9;letter-spacing:0.7px;left:1534.20px;-webkit-text-stroke:0.35px;">GENERATE COLOR SCALE</div><svg class="b" style="left:1852.50px;top:1127.80px;" width="16" height="12" viewBox="0 0 16 12" fill="none"><path d="M3 3.6L8 8.4L13 3.6" stroke="#c5d3dc" stroke-width="1.4" stroke-linecap="round" stroke-linejoin="round"/></svg><div class="b" style="left:1488.90px;top:1174.20px;width:4.40px;height:10.60px;background:#4e8bd0;border-radius:2.1px;"></div><div class="t s" style="top:1171.80px;font-size:12.2px;line-height:17px;color:#86b7ee;font-weight:bold;letter-spacing:0.45px;left:1511.80px;-webkit-text-stroke:0.3px;">COLOR</div><div class="b" style="left:1568.80px;top:1171.40px;width:17.00px;height:16.60px;background:#a38a2b;border-radius:5.2px;"></div><div class="b" style="left:1488.90px;top:1205.70px;width:4.40px;height:10.60px;background:#4e8bd0;border-radius:2.1px;"></div><div class="t s" style="top:1202.90px;font-size:12.2px;line-height:17px;color:#fff;font-weight:bold;letter-spacing:0.45px;left:1511.80px;-webkit-text-stroke:0.3px;">STEPS</div><svg class="b" style="left:1557.40px;top:1204.00px;" width="12" height="14" viewBox="0 0 12 14" fill="none"><path d="M6 12.2V2.2M2.2 6L6 2.2L9.8 6" stroke="#fff" stroke-width="1.7" stroke-linecap="round" stroke-linejoin="round"/></svg><div class="b" style="left:1578.60px;top:1191.50px;width:194.40px;height:39.00px;background:#181c23;border:1.3px solid #252e38;border-radius:7px;"></div><div class="t s" style="top:1199.80px;font-size:16.5px;line-height:23px;color:#fff;left:1594.60px;">12</div><div class="b" style="left:1488.90px;top:1248.70px;width:4.40px;height:10.60px;background:#4e8bd0;border-radius:2.1px;"></div><div class="t s" style="top:1245.90px;font-size:12.2px;line-height:17px;color:#fff;font-weight:bold;letter-spacing:0.45px;left:1511.80px;-webkit-text-stroke:0.3px;">STEPS</div><svg class="b" style="left:1557.40px;top:1247.00px;" width="12" height="14" viewBox="0 0 12 14" fill="none"><path d="M6 1.8V11.8M2.2 8L6 11.8L9.8 8" stroke="#fff" stroke-width="1.7" stroke-linecap="round" stroke-linejoin="round"/></svg><div class="b" style="left:1578.60px;top:1234.50px;width:194.40px;height:39.00px;background:#181c23;border:1.3px solid #252e38;border-radius:7px;"></div><div class="t s" style="top:1242.80px;font-size:16.5px;line-height:23px;color:#fff;left:1594.60px;">12</div><div class="t s" style="top:1171.80px;font-size:12.2px;line-height:17px;color:#86b7ee;font-weight:bold;letter-spacing:0.45px;left:1806.50px;-webkit-text-stroke:0.3px;">SET</div><div class="b" style="left:1836.80px;top:1171.10px;width:40.20px;height:17.30px;background:#1b2c41;border-radius:4px;"></div><div class="t m" style="top:1172.19px;font-size:12.6px;line-height:18px;color:#86b8ef;left:1556.90px;width:600px;text-align:center;">[25]</div><div class="b" style="left:1894.70px;top:1174.40px;width:4.40px;height:10.60px;background:#4e8bd0;border-radius:2.1px;"></div><div class="t m" style="top:1192.49px;font-size:14.2px;line-height:20px;color:#dde4ea;left:1253.70px;width:600px;text-align:right;">0</div><div class="b" style="left:1859.40px;top:1193.10px;width:16.60px;height:16.60px;background:#fbf8ec;border-radius:5.2px;"></div><div class="b" style="left:1894.70px;top:1196.40px;width:4.40px;height:10.60px;background:#4e8bd0;border-radius:2.1px;"></div><div class="t m" style="top:1214.65px;font-size:14.2px;line-height:20px;color:#dde4ea;left:1253.70px;width:600px;text-align:right;">1</div><div class="b" style="left:1859.40px;top:1215.26px;width:16.60px;height:16.60px;background:#f6f0da;border-radius:5.2px;"></div><div class="b" style="left:1894.70px;top:1218.56px;width:4.40px;height:10.60px;background:#4e8bd0;border-radius:2.1px;"></div><div class="t m" style="top:1236.81px;font-size:14.2px;line-height:20px;color:#dde4ea;left:1253.70px;width:600px;text-align:right;">2</div><div class="b" style="left:1859.40px;top:1237.42px;width:16.60px;height:16.60px;background:#f1e9c9;border-radius:5.2px;"></div><div class="b" style="left:1894.70px;top:1240.72px;width:4.40px;height:10.60px;background:#4e8bd0;border-radius:2.1px;"></div><div class="t m" style="top:1258.97px;font-size:14.2px;line-height:20px;color:#dde4ea;left:1253.70px;width:600px;text-align:right;">3</div><div class="b" style="left:1859.40px;top:1259.58px;width:16.60px;height:16.60px;background:#ede1b8;border-radius:5.2px;"></div><div class="b" style="left:1894.70px;top:1262.88px;width:4.40px;height:10.60px;background:#4e8bd0;border-radius:2.1px;"></div><div class="t m" style="top:1281.13px;font-size:14.2px;line-height:20px;color:#dde4ea;left:1253.70px;width:600px;text-align:right;">4</div><div class="b" style="left:1859.40px;top:1281.74px;width:16.60px;height:16.60px;background:#e8daa7;border-radius:5.2px;"></div><div class="b" style="left:1894.70px;top:1285.04px;width:4.40px;height:10.60px;background:#4e8bd0;border-radius:2.1px;"></div><div class="t m" style="top:1303.29px;font-size:14.2px;line-height:20px;color:#dde4ea;left:1253.70px;width:600px;text-align:right;">5</div><div class="b" style="left:1859.40px;top:1303.90px;width:16.60px;height:16.60px;background:#e4d396;border-radius:5.2px;"></div><div class="b" style="left:1894.70px;top:1307.20px;width:4.40px;height:10.60px;background:#4e8bd0;border-radius:2.1px;"></div><div class="t m" style="top:1325.45px;font-size:14.2px;line-height:20px;color:#dde4ea;left:1253.70px;width:600px;text-align:right;">6</div><div class="b" style="left:1859.40px;top:1326.06px;width:16.60px;height:16.60px;background:#dfcb85;border-radius:5.2px;"></div><div class="b" style="left:1894.70px;top:1329.36px;width:4.40px;height:10.60px;background:#4e8bd0;border-radius:2.1px;"></div><div class="t m" style="top:1347.61px;font-size:14.2px;line-height:20px;color:#dde4ea;left:1253.70px;width:600px;text-align:right;">7</div><div class="b" style="left:1859.40px;top:1348.22px;width:16.60px;height:16.60px;background:#dbc475;border-radius:5.2px;"></div><div class="b" style="left:1894.70px;top:1351.52px;width:4.40px;height:10.60px;background:#4e8bd0;border-radius:2.1px;"></div><div class="t m" style="top:1369.77px;font-size:14.2px;line-height:20px;color:#dde4ea;left:1253.70px;width:600px;text-align:right;">8</div><div class="b" style="left:1859.40px;top:1370.38px;width:16.60px;height:16.60px;background:#d6bd64;border-radius:5.2px;"></div><div class="b" style="left:1894.70px;top:1373.68px;width:4.40px;height:10.60px;background:#4e8bd0;border-radius:2.1px;"></div><div class="t m" style="top:1391.93px;font-size:14.2px;line-height:20px;color:#dde4ea;left:1253.70px;width:600px;text-align:right;">9</div><div class="b" style="left:1859.40px;top:1392.54px;width:16.60px;height:16.60px;background:#d2b655;border-radius:5.2px;"></div><div class="b" style="left:1894.70px;top:1395.84px;width:4.40px;height:10.60px;background:#4e8bd0;border-radius:2.1px;"></div><div class="t m" style="top:1414.09px;font-size:14.2px;line-height:20px;color:#dde4ea;left:1253.70px;width:600px;text-align:right;">10</div><div class="b" style="left:1859.40px;top:1414.70px;width:16.60px;height:16.60px;background:#cdae49;border-radius:5.2px;"></div><div class="b" style="left:1894.70px;top:1418.00px;width:4.40px;height:10.60px;background:#4e8bd0;border-radius:2.1px;"></div><div class="t m" style="top:1436.25px;font-size:14.2px;line-height:20px;color:#dde4ea;left:1253.70px;width:600px;text-align:right;">11</div><div class="b" style="left:1859.40px;top:1436.86px;width:16.60px;height:16.60px;background:#bfa140;border-radius:5.2px;"></div><div class="b" style="left:1894.70px;top:1440.16px;width:4.40px;height:10.60px;background:#4e8bd0;border-radius:2.1px;"></div><div class="t m" style="top:1458.41px;font-size:14.2px;line-height:20px;color:#dde4ea;left:1253.70px;width:600px;text-align:right;">12</div><div class="b" style="left:1859.40px;top:1459.02px;width:16.60px;height:16.60px;background:#ae933b;border-radius:5.2px;"></div><div class="b" style="left:1894.70px;top:1462.32px;width:4.40px;height:10.60px;background:#4e8bd0;border-radius:2.1px;"></div><div class="t m" style="top:1480.57px;font-size:14.2px;line-height:20px;color:#dde4ea;left:1253.70px;width:600px;text-align:right;">13</div><div class="b" style="left:1859.40px;top:1481.18px;width:16.60px;height:16.60px;background:#a18636;border-radius:5.2px;"></div><div class="b" style="left:1894.70px;top:1484.48px;width:4.40px;height:10.60px;background:#4e8bd0;border-radius:2.1px;"></div><div class="t m" style="top:1502.73px;font-size:14.2px;line-height:20px;color:#dde4ea;left:1253.70px;width:600px;text-align:right;">14</div><div class="b" style="left:1859.40px;top:1503.34px;width:16.60px;height:16.60px;background:#947b31;border-radius:5.2px;"></div><div class="b" style="left:1894.70px;top:1506.64px;width:4.40px;height:10.60px;background:#4e8bd0;border-radius:2.1px;"></div><div class="t m" style="top:1524.89px;font-size:14.2px;line-height:20px;color:#dde4ea;left:1253.70px;width:600px;text-align:right;">15</div><div class="b" style="left:1859.40px;top:1525.50px;width:16.60px;height:16.60px;background:#866f2c;border-radius:5.2px;"></div><div class="b" style="left:1894.70px;top:1528.80px;width:4.40px;height:10.60px;background:#4e8bd0;border-radius:2.1px;"></div><div class="t m" style="top:1547.05px;font-size:14.2px;line-height:20px;color:#dde4ea;left:1253.70px;width:600px;text-align:right;">16</div><div class="b" style="left:1859.40px;top:1547.66px;width:16.60px;height:16.60px;background:#786428;border-radius:5.2px;"></div><div class="b" style="left:1894.70px;top:1550.96px;width:4.40px;height:10.60px;background:#4e8bd0;border-radius:2.1px;"></div><div class="t m" style="top:1569.21px;font-size:14.2px;line-height:20px;color:#dde4ea;left:1253.70px;width:600px;text-align:right;">17</div><div class="b" style="left:1859.40px;top:1569.82px;width:16.60px;height:16.60px;background:#6a5823;border-radius:5.2px;"></div><div class="b" style="left:1894.70px;top:1573.12px;width:4.40px;height:10.60px;background:#4e8bd0;border-radius:2.1px;"></div><div class="t m" style="top:1591.37px;font-size:14.2px;line-height:20px;color:#dde4ea;left:1253.70px;width:600px;text-align:right;">18</div><div class="b" style="left:1859.40px;top:1591.98px;width:16.60px;height:16.60px;background:#5d4d1f;border-radius:5.2px;"></div><div class="b" style="left:1894.70px;top:1595.28px;width:4.40px;height:10.60px;background:#4e8bd0;border-radius:2.1px;"></div><div class="t m" style="top:1613.53px;font-size:14.2px;line-height:20px;color:#dde4ea;left:1253.70px;width:600px;text-align:right;">19</div><div class="b" style="left:1859.40px;top:1614.14px;width:16.60px;height:16.60px;background:#50421a;border-radius:5.2px;"></div><div class="b" style="left:1894.70px;top:1617.44px;width:4.40px;height:10.60px;background:#4e8bd0;border-radius:2.1px;"></div><div class="t m" style="top:1635.69px;font-size:14.2px;line-height:20px;color:#dde4ea;left:1253.70px;width:600px;text-align:right;">20</div><div class="b" style="left:1859.40px;top:1636.30px;width:16.60px;height:16.60px;background:#423716;border-radius:5.2px;"></div><div class="b" style="left:1894.70px;top:1639.60px;width:4.40px;height:10.60px;background:#4e8bd0;border-radius:2.1px;"></div><div class="t m" style="top:1657.85px;font-size:14.2px;line-height:20px;color:#dde4ea;left:1253.70px;width:600px;text-align:right;">21</div><div class="b" style="left:1859.40px;top:1658.46px;width:16.60px;height:16.60px;background:#352c11;border-radius:5.2px;"></div><div class="b" style="left:1894.70px;top:1661.76px;width:4.40px;height:10.60px;background:#4e8bd0;border-radius:2.1px;"></div><div class="t m" style="top:1680.01px;font-size:14.2px;line-height:20px;color:#dde4ea;left:1253.70px;width:600px;text-align:right;">22</div><div class="b" style="left:1859.40px;top:1680.62px;width:16.60px;height:16.60px;background:#27200d;border-radius:5.2px;"></div><div class="b" style="left:1894.70px;top:1683.92px;width:4.40px;height:10.60px;background:#4e8bd0;border-radius:2.1px;"></div><div class="t m" style="top:1702.17px;font-size:14.2px;line-height:20px;color:#dde4ea;left:1253.70px;width:600px;text-align:right;">23</div><div class="b" style="left:1859.40px;top:1702.78px;width:16.60px;height:16.60px;background:#191508;border-radius:5.2px;"></div><div class="b" style="left:1894.70px;top:1706.08px;width:4.40px;height:10.60px;background:#4e8bd0;border-radius:2.1px;"></div><div class="t m" style="top:1724.33px;font-size:14.2px;line-height:20px;color:#dde4ea;left:1253.70px;width:600px;text-align:right;">24</div><div class="b" style="left:1859.40px;top:1724.94px;width:16.60px;height:16.60px;background:#0b0a04;border-radius:5.2px;"></div><div class="b" style="left:1894.70px;top:1728.24px;width:4.40px;height:10.60px;background:#4e8bd0;border-radius:2.1px;"></div>
<div class="b" style="left:755px;top:1182px;width:355px;height:285px;background:#181c23;border-radius:7px;overflow:hidden;"><div class="b" style="left:0;top:0;width:355px;height:54.5px;background:#232b33;border-bottom:2.4px solid #262f38;"></div></div><div class="t s" style="top:1200.30px;font-size:12px;line-height:17px;color:#a5bcc9;letter-spacing:1.5px;left:774.30px;-webkit-text-stroke:0.35px;">SWITCH</div><svg class="b" style="left:1065.90px;top:1203.20px;" width="16" height="12" viewBox="0 0 16 12" fill="none"><path d="M3 3.6L8 8.4L13 3.6" stroke="#c5d3dc" stroke-width="1.4" stroke-linecap="round" stroke-linejoin="round"/></svg><div class="b" style="left:752.40px;top:1250.00px;width:4.40px;height:10.60px;background:#4e8bd0;border-radius:2.1px;"></div><div class="t s" style="top:1246.70px;font-size:12.2px;line-height:17px;color:#86b7ee;font-weight:bold;letter-spacing:1.0px;left:774.70px;-webkit-text-stroke:0.35px;">CONDITION</div><div class="b" style="left:857.20px;top:1246.20px;width:70.60px;height:17.40px;background:#1b2c41;border-radius:4px;"></div><div class="t m" style="top:1246.42px;font-size:13px;line-height:18px;color:#86b8ef;left:592.40px;width:600px;text-align:center;">Personal</div><div class="t s" style="top:1246.70px;font-size:12.2px;line-height:17px;color:#86b7ee;font-weight:bold;letter-spacing:1.0px;left:490.20px;width:600px;text-align:right;-webkit-text-stroke:0.35px;">OUTPUT</div><div class="b" style="left:1108.60px;top:1250.00px;width:4.40px;height:10.60px;background:#4e8bd0;border-radius:2.1px;"></div><div class="b" style="left:752.40px;top:1277.90px;width:4.40px;height:10.60px;background:#4e8bd0;border-radius:2.1px;"></div><div class="t s" style="top:1274.20px;font-size:12.6px;line-height:18px;color:#fff;font-weight:bold;letter-spacing:0.7px;left:774.70px;-webkit-text-stroke:0.35px;">Samurai</div><div class="b" style="left:833.50px;top:1274.20px;width:68.50px;height:18.20px;background:#1b2c41;border-radius:4px;"></div><div class="t m" style="top:1274.19px;font-size:14.2px;line-height:20px;color:#86b8ef;left:567.75px;width:600px;text-align:center;">#b051cc</div><div class="b" style="left:752.40px;top:1314.10px;width:4.40px;height:10.60px;background:#4e8bd0;border-radius:2.1px;"></div><div class="t s" style="top:1310.40px;font-size:12.6px;line-height:18px;color:#fff;font-weight:bold;letter-spacing:0.85px;left:774.70px;-webkit-text-stroke:0.35px;">Viking</div><div class="b" style="left:821.00px;top:1310.40px;width:69.00px;height:18.20px;background:#1b2c41;border-radius:4px;"></div><div class="t m" style="top:1310.39px;font-size:14.2px;line-height:20px;color:#86b8ef;left:555.50px;width:600px;text-align:center;">#da291c</div><div class="b" style="left:752.40px;top:1349.00px;width:4.40px;height:10.60px;background:#4e8bd0;border-radius:2.1px;"></div><div class="t s" style="top:1345.30px;font-size:12.6px;line-height:18px;color:#fff;font-weight:bold;letter-spacing:0.72px;left:774.70px;-webkit-text-stroke:0.35px;">Knight</div><div class="b" style="left:822.90px;top:1345.30px;width:68.80px;height:18.20px;background:#1b2c41;border-radius:4px;"></div><div class="t m" style="top:1345.29px;font-size:14.2px;line-height:20px;color:#86b8ef;left:557.30px;width:600px;text-align:center;">#0433BF</div><div class="b" style="left:752.40px;top:1384.30px;width:4.40px;height:10.60px;background:#4e8bd0;border-radius:2.1px;"></div><div class="t s" style="top:1380.60px;font-size:12.6px;line-height:18px;color:#fff;font-weight:bold;letter-spacing:0.62px;left:774.70px;-webkit-text-stroke:0.35px;">Personal</div><div class="b" style="left:836.40px;top:1380.60px;width:69.20px;height:18.20px;background:#1b2c41;border-radius:4px;"></div><div class="t m" style="top:1380.59px;font-size:14.2px;line-height:20px;color:#86b8ef;left:571.00px;width:600px;text-align:center;">#a38827</div><div class="b" style="left:765.70px;top:1409.40px;width:199.70px;height:39.00px;background:#181c23;border:1.3px solid #252e38;border-radius:7px;"></div><div class="t s" style="top:1417.90px;font-size:16.5px;line-height:23px;color:#8b8f94;letter-spacing:0.15px;left:779.50px;-webkit-text-stroke:0.3px;">Some key name</div><svg class="b" style="left:978.20px;top:1419.60px;" width="16" height="16" viewBox="0 0 16 16" fill="none"><path d="M8 2V14M2 8H14" stroke="#8a9aa6" stroke-width="1.2" stroke-linecap="round"/></svg>
<div class="b" style="left:1415.00px;top:1800.00px;width:168.00px;height:63.80px;background:#191d24;border:2px solid #272f39;border-radius:11px;"></div>
<svg class="b" style="left:1431.10px;top:1816.10px;" width="32" height="32" viewBox="0 0 32 32" fill="none"><path d="M16 3.9V28.1M3.9 16H28.1" stroke="#fff" stroke-width="3.5"/></svg>
<svg class="b" style="left:1483.00px;top:1815.70px;" width="32" height="32" viewBox="0 0 32 32" fill="none"><path d="M3.7 16H28.3" stroke="#fff" stroke-width="3.5"/></svg>
<svg class="b" style="left:1535.00px;top:1816.00px;" width="32" height="32" viewBox="0 0 32 32" fill="none"><path d="M5.55 12.8V9.5a3 3 0 0 1 3-3H11.85M20.15 6.5H23.45a3 3 0 0 1 3 3V12.8M26.45 19.2V22.5a3 3 0 0 1-3 3H20.15M11.85 25.5H8.55a3 3 0 0 1-3-3V19.2" stroke="#fff" stroke-width="3.5" stroke-linejoin="round"/></svg>
<div class="b" style="left:2126px;top:18px;width:800px;height:1585.5px;background:#1e1e1e;border:2px solid #252f38;border-radius:12px;overflow:hidden;"><div class="b" style="left:0;top:0;width:100%;height:68.4px;background:#232b33;border-bottom:1.6px solid #262f38;"></div></div>
<div class="b" style="left:2156.00px;top:52.90px;width:28.00px;height:3.20px;background:#a5c3d7;border-radius:1.6px;"></div>
<div class="t s" style="top:38.10px;font-size:23.6px;line-height:33px;color:#fff;font-weight:bold;left:2201.60px;">Preview</div>
<svg class="b" style="left:2806.00px;top:34.00px;" width="40" height="40" viewBox="0 0 40 40" fill="none"><rect x="5.5" y="5.4" width="29.1" height="29.1" rx="5" fill="#000" stroke="#c7d9e8" stroke-width="3.2"/>
<path d="M15.4 13.6L26.2 20L15.4 26.6Z" fill="#000" stroke="#c7d9e8" stroke-width="3" stroke-linejoin="round"/></svg>
<div class="b" style="left:2860.40px;top:26.20px;width:55.20px;height:55.60px;background:#181d25;border-radius:7px;"></div>
<svg class="b" style="left:2868.00px;top:34.00px;" width="40" height="40" viewBox="0 0 40 40" fill="none"><path d="M13.4 13.8L6 19.9L13.4 26.7M22.5 7.8L17.7 31.9M26.8 13.8L34.3 19.9L26.8 26.7" stroke="#fff" stroke-width="3.3" stroke-linecap="round" stroke-linejoin="round"/></svg>
<div class="code" style="left:2149.2px;top:108.3px;font-size:24px;line-height:33.35px;transform:scaleY(1.08);transform-origin:0 0;"><span class="k">const</span> <span class="f">Example</span> = () =&gt; {

<span class="c">    //Note that you might not see the effect of the</span>
<span class="c">font for the theme if you do not have it installed</span>
<span class="c">locally. We do not retrieve fonts</span>
    <span class="k">const</span> <span class="v">cardStyle</span> = <span class="f">useTokens</span>(<span class="g">'container'</span>);
    <span class="k">const</span> <span class="v">cardEyebrow</span> = <span class="f">useTokens</span>(<span class="g">'eyebrow'</span>);
    <span class="k">const</span> <span class="v">cardContent</span>= <span class="f">useTokens</span>(<span class="g">'content'</span>);
    <span class="k">const</span> <span class="v">cardTitle</span>= <span class="f">useTokens</span>(<span class="g">'title'</span>);
    <span class="k">const</span> <span class="v">buttonStyle</span>= <span class="f">useTokens</span>(<span class="g">'button'</span>);


    <span class="k">return</span> (&lt;<span class="n">div</span> <span class="v">class=</span>"<span class="g">card</span>" <span class="v">style=</span>{<span class="n">cardStyle</span>}&gt;
              &lt;<span class="n">div</span>&gt;
              &lt;<span class="n">div</span> <span class="v">style=</span>{<span class="n">cardEyebrow</span>}&gt;
{<span class="v">cardEyebrow?.content</span>}&lt;/<span class="n">div</span>&gt;
              &lt;<span class="n">div</span> <span class="v">style=</span>{<span class="n">cardTitle</span>}&gt;
{<span class="v">cardTitle?.content</span>}&lt;/<span class="n">div</span>&gt;
              &lt;/<span class="n">div</span>&gt;
              &lt;<span class="n">div</span> <span class="v">style=</span>{<span class="n">cardContent</span>}&gt;
{<span class="v">cardContent?.content</span>}&lt;/<span class="n">div</span>&gt;
              &lt;<span class="n">button</span> <span class="v">style=</span>{<span class="n">buttonStyle</span>}&gt;
{<span class="v">buttonStyle?.content</span>}&lt;/<span class="n">button</span>&gt;
        &lt;/<span class="n">div</span>&gt;);
}
<span class="f">render</span>(&lt;<span class="n">Example</span>/&gt;)</div>
<svg class="b" style="left:2126.00px;top:1584.00px;" width="20" height="20" viewBox="0 0 20 20" fill="none"><path d="M3.4 4.2L15.6 16.4M4.4 11.6L8.2 15.4" stroke="#d6d6d6" stroke-width="1.7" stroke-linecap="round"/></svg>
</div></body></html>
